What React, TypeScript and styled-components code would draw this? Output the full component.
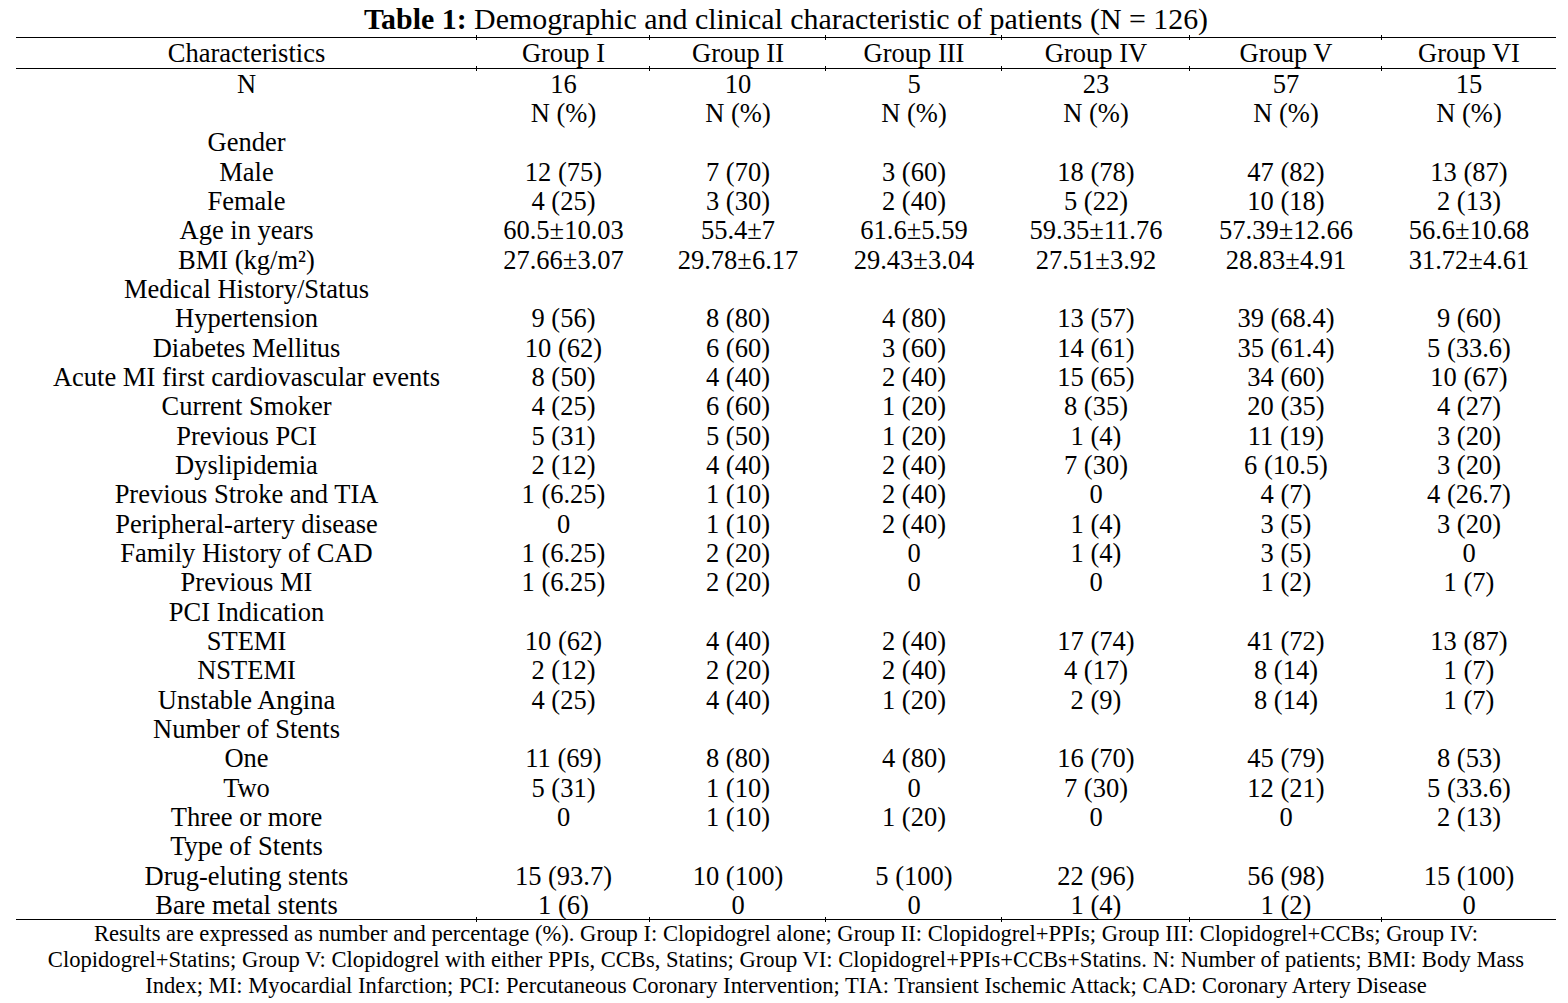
import styled, { createGlobalStyle } from "styled-components";

const GlobalStyle = createGlobalStyle`
  html, body {
    margin: 0;
    padding: 0;
    background: #ffffff;
  }
  body {
    font-family: "Liberation Serif", "Times New Roman", serif;
    color: #000000;
  }
`;

const Page = styled.div`
  width: 1568px;
  padding: 0 12px 0 16px;
  box-sizing: border-box;
`;

const Title = styled.div`
  width: 1540px;
  text-align: center;
  font-size: 29.9px;
  line-height: 30px;
  padding-top: 4px;
  height: 37px;
  box-sizing: border-box;
  white-space: nowrap;
  b {
    font-weight: 700;
  }
`;

const Table = styled.table`
  width: 1540px;
  border-collapse: collapse;
  table-layout: fixed;
  font-size: 26.5px;
`;

const Tick = `
  content: "";
  position: absolute;
  left: -1px;
  width: 1px;
  height: 5px;
  background: #000;
`;

const HeadCell = styled.th<{ $first?: boolean }>`
  position: relative;
  font-weight: 400;
  text-align: center;
  height: 30px;
  padding: 0;
  line-height: 30px;
  border-top: 1.5px solid #000;
  border-bottom: 1.5px solid #000;
  white-space: nowrap;
  &::before {
    ${(p) => (p.$first ? "display: none;" : Tick)}
    top: -3px;
  }
  &::after {
    ${(p) => (p.$first ? "display: none;" : Tick)}
    bottom: -3px;
  }
`;

const Row = styled.tr<{ $last?: boolean }>`
  height: 29.34px;
  td {
    border-bottom: ${(p) => (p.$last ? "1.5px solid #000" : "none")};
  }
`;

const Cell = styled.td<{ $tick?: boolean }>`
  position: relative;
  text-align: center;
  padding: 2px 0 0;
  line-height: 27px;
  white-space: nowrap;
  &::after {
    ${(p) => (p.$tick ? Tick : "display: none;")}
    bottom: -3px;
  }
`;

const Notes = styled.div`
  width: 1540px;
  text-align: center;
  font-size: 22.6px;
  line-height: 26px;
  padding-top: 1px;
  span {
    display: block;
    white-space: nowrap;
  }
`;

const widths = [461, 173, 176, 176, 188, 192, 174];
const groups = ["Group I", "Group II", "Group III", "Group IV", "Group V", "Group VI"];

const rows: string[][] = [
  ["N", "16", "10", "5", "23", "57", "15"],
  ["", "N (%)", "N (%)", "N (%)", "N (%)", "N (%)", "N (%)"],
  ["Gender", "", "", "", "", "", ""],
  ["Male", "12 (75)", "7 (70)", "3 (60)", "18 (78)", "47 (82)", "13 (87)"],
  ["Female", "4 (25)", "3 (30)", "2 (40)", "5 (22)", "10 (18)", "2 (13)"],
  ["Age in years", "60.5±10.03", "55.4±7", "61.6±5.59", "59.35±11.76", "57.39±12.66", "56.6±10.68"],
  ["BMI (kg/m²)", "27.66±3.07", "29.78±6.17", "29.43±3.04", "27.51±3.92", "28.83±4.91", "31.72±4.61"],
  ["Medical History/Status", "", "", "", "", "", ""],
  ["Hypertension", "9 (56)", "8 (80)", "4 (80)", "13 (57)", "39 (68.4)", "9 (60)"],
  ["Diabetes Mellitus", "10 (62)", "6 (60)", "3 (60)", "14 (61)", "35 (61.4)", "5 (33.6)"],
  ["Acute MI first cardiovascular events", "8 (50)", "4 (40)", "2 (40)", "15 (65)", "34 (60)", "10 (67)"],
  ["Current Smoker", "4 (25)", "6 (60)", "1 (20)", "8 (35)", "20 (35)", "4 (27)"],
  ["Previous PCI", "5 (31)", "5 (50)", "1 (20)", "1 (4)", "11 (19)", "3 (20)"],
  ["Dyslipidemia", "2 (12)", "4 (40)", "2 (40)", "7 (30)", "6 (10.5)", "3 (20)"],
  ["Previous Stroke and TIA", "1 (6.25)", "1 (10)", "2 (40)", "0", "4 (7)", "4 (26.7)"],
  ["Peripheral-artery disease", "0", "1 (10)", "2 (40)", "1 (4)", "3 (5)", "3 (20)"],
  ["Family History of CAD", "1 (6.25)", "2 (20)", "0", "1 (4)", "3 (5)", "0"],
  ["Previous MI", "1 (6.25)", "2 (20)", "0", "0", "1 (2)", "1 (7)"],
  ["PCI Indication", "", "", "", "", "", ""],
  ["STEMI", "10 (62)", "4 (40)", "2 (40)", "17 (74)", "41 (72)", "13 (87)"],
  ["NSTEMI", "2 (12)", "2 (20)", "2 (40)", "4 (17)", "8 (14)", "1 (7)"],
  ["Unstable Angina", "4 (25)", "4 (40)", "1 (20)", "2 (9)", "8 (14)", "1 (7)"],
  ["Number of Stents", "", "", "", "", "", ""],
  ["One", "11 (69)", "8 (80)", "4 (80)", "16 (70)", "45 (79)", "8 (53)"],
  ["Two", "5 (31)", "1 (10)", "0", "7 (30)", "12 (21)", "5 (33.6)"],
  ["Three or more", "0", "1 (10)", "1 (20)", "0", "0", "2 (13)"],
  ["Type of Stents", "", "", "", "", "", ""],
  ["Drug-eluting stents", "15 (93.7)", "10 (100)", "5 (100)", "22 (96)", "56 (98)", "15 (100)"],
  ["Bare metal stents", "1 (6)", "0", "0", "1 (4)", "1 (2)", "0"],
];

export default function App() {
  return (
    <Page>
      <GlobalStyle />
      <Title>
        <b>Table 1:</b> Demographic and clinical characteristic of patients (N = 126)
      </Title>
      <Table>
        <colgroup>
          {widths.map((w, i) => (
            <col key={i} style={{ width: w }} />
          ))}
        </colgroup>
        <thead>
          <tr>
            <HeadCell $first>Characteristics</HeadCell>
            {groups.map((g) => (
              <HeadCell key={g}>{g}</HeadCell>
            ))}
          </tr>
        </thead>
        <tbody>
          {rows.map((r, i) => {
            const last = i === rows.length - 1;
            return (
              <Row key={i} $last={last}>
                {r.map((c, j) => (
                  <Cell key={j} $tick={last && j > 0}>
                    {c}
                  </Cell>
                ))}
              </Row>
            );
          })}
        </tbody>
      </Table>
      <Notes>
        <span>
          Results are expressed as number and percentage (%). Group I: Clopidogrel alone; Group II: Clopidogrel+PPIs; Group III: Clopidogrel+CCBs; Group IV:
        </span>
        <span>
          Clopidogrel+Statins; Group V: Clopidogrel with either PPIs, CCBs, Statins; Group VI: Clopidogrel+PPIs+CCBs+Statins. N: Number of patients; BMI: Body Mass
        </span>
        <span>
          Index; MI: Myocardial Infarction; PCI: Percutaneous Coronary Intervention; TIA: Transient Ischemic Attack; CAD: Coronary Artery Disease
        </span>
      </Notes>
    </Page>
  );
}
